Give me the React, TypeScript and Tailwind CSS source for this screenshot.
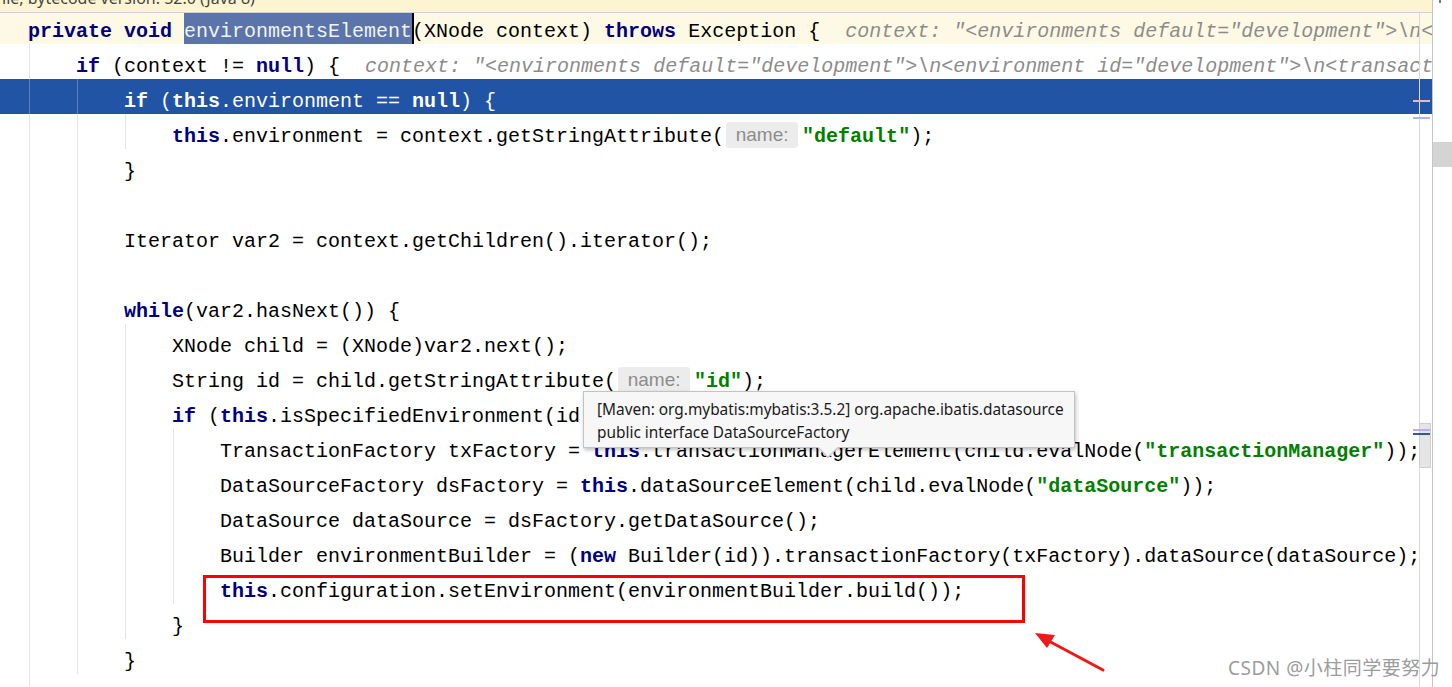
import React from 'react';

type Kind = 'p' | 'kw' | 'str' | 'hint' | 'dbg';
type Tok = { t: string; k: Kind };
type Line = { level: number; guides: number; toks: Tok[] };

const p = (t: string): Tok => ({ t, k: 'p' });
const kw = (t: string): Tok => ({ t, k: 'kw' });
const str = (t: string): Tok => ({ t, k: 'str' });
const dbg = (t: string): Tok => ({ t, k: 'dbg' });
const hint = (): Tok => ({ t: 'name:', k: 'hint' });

const padByLevel = ['pl-[28px]', 'pl-[76px]', 'pl-[124px]', 'pl-[172px]', 'pl-[220px]'];
const guideLeft = ['left-[29px]', 'left-[77px]', 'left-[125px]', 'left-[173px]'];

// line 1 and 3 are special (find highlight / selection), the rest come from here
const lines: Line[] = [
  {
    level: 1,
    guides: 1,
    toks: [
      kw('if'),
      p(' (context != '),
      kw('null'),
      p(') {'),
      dbg('context: "<environments default="development">\\n<environment id="development">\\n<transaction'),
    ],
  },
  { level: 2, guides: 2, toks: [] }, // selected line, rendered separately
  {
    level: 3,
    guides: 3,
    toks: [kw('this'), p('.environment = context.getStringAttribute('), hint(), str('"default"'), p(');')],
  },
  { level: 2, guides: 2, toks: [p('}')] },
  { level: 2, guides: 2, toks: [] },
  { level: 2, guides: 2, toks: [p('Iterator var2 = context.getChildren().iterator();')] },
  { level: 2, guides: 2, toks: [] },
  { level: 2, guides: 2, toks: [kw('while'), p('(var2.hasNext()) {')] },
  { level: 3, guides: 3, toks: [p('XNode child = (XNode)var2.next();')] },
  { level: 3, guides: 3, toks: [p('String id = child.getStringAttribute('), hint(), str('"id"'), p(');')] },
  { level: 3, guides: 3, toks: [kw('if'), p(' ('), kw('this'), p('.isSpecifiedEnvironment(id)) {')] },
  {
    level: 4,
    guides: 4,
    toks: [
      p('TransactionFactory txFactory = '),
      kw('this'),
      p('.transactionManagerElement(child.evalNode('),
      str('"transactionManager"'),
      p('));'),
    ],
  },
  {
    level: 4,
    guides: 4,
    toks: [p('DataSourceFactory dsFactory = '), kw('this'), p('.dataSourceElement(child.evalNode('), str('"dataSource"'), p('));')],
  },
  { level: 4, guides: 4, toks: [p('DataSource dataSource = dsFactory.getDataSource();')] },
  {
    level: 4,
    guides: 4,
    toks: [
      p('Builder environmentBuilder = ('),
      kw('new'),
      p(' Builder(id)).transactionFactory(txFactory).dataSource(dataSource);'),
    ],
  },
  { level: 4, guides: 4, toks: [kw('this'), p('.configuration.setEnvironment(environmentBuilder.build());')] },
  { level: 3, guides: 3, toks: [p('}')] },
  { level: 2, guides: 2, toks: [p('}')] },
  { level: 1, guides: 1, toks: [p('}')] },
];

const Token: React.FC<{ tok: Tok; selected?: boolean }> = ({ tok, selected }) => {
  switch (tok.k) {
    case 'kw':
      return <span className={selected ? 'font-bold text-white' : 'font-bold text-[#000080]'}>{tok.t}</span>;
    case 'str':
      return <span className="font-bold text-[#008000]">{tok.t}</span>;
    case 'hint':
      return (
        <span className="relative top-[3px] ml-[2px] mr-[4px] inline-block h-[26px] w-[72px] rounded-[3px] bg-[#ececec] text-center align-top font-['Liberation_Sans',sans-serif] text-[19px] leading-[26px] text-[#8c8c8c]">
          {tok.t}
        </span>
      );
    case 'dbg':
      return <span className="ml-[25px] italic text-[#8c8c8c]">{tok.t}</span>;
    default:
      return <span className={selected ? 'text-white' : 'text-black'}>{tok.t}</span>;
  }
};

const Guides: React.FC<{ count: number; light?: boolean }> = ({ count, light }) => (
  <>
    {guideLeft.slice(0, count).map((g) => (
      <span key={g} className={`absolute top-0 bottom-0 w-px ${g} ${light ? 'bg-[#5b7fc0]' : 'bg-[#e3e3e3]'}`} />
    ))}
  </>
);

const CodeLine: React.FC<{ line: Line }> = ({ line }) => (
  <div className={`relative h-[35px] whitespace-pre pt-[5px] leading-[35px] ${padByLevel[line.level]}`}>
    <Guides count={line.guides} />
    {line.toks.map((tok, i) => (
      <Token key={i} tok={tok} />
    ))}
  </div>
);

const App: React.FC = () => {
  return (
    <div className="relative flex h-[687px] w-[1452px] overflow-hidden bg-white">
      {/* editor column */}
      <div className="flex w-[1432px] flex-col overflow-hidden">
        {/* decompiled file banner, mostly scrolled off */}
        <div className="h-[13px] shrink-0 overflow-hidden border-b border-[#d2d2d2] bg-[#fdf4d2]">
          <div className="-mt-[13px] whitespace-pre pl-[2px] font-['Noto_Sans',sans-serif] text-[16px] leading-[22px] text-[#444]">
            ile, bytecode version: 52.0 (Java 8)
          </div>
        </div>

        <div className="relative flex-1 font-['Liberation_Mono',monospace] text-[20px]">
          {/* right margin guide */}
          <div className="absolute top-0 bottom-0 left-[1419px] z-10 w-px bg-[#dadada]" />

          {/* line 1: method signature, find highlight + caret */}
          <div className="h-[31px] overflow-hidden whitespace-pre bg-[#fef9e4] pl-[28px] pt-[1px] leading-[35px]">
            <span className="font-bold text-[#000080]">private void </span>
            <span className="bg-[#5b74aa] pt-[8px] pb-[2px] text-[#f2f2f2]">environmentsElement</span>
            <span className="relative -top-[2px] -mr-[2px] inline-block h-[33px] w-[2px] bg-black align-top" />
            <span className="text-black">(XNode context) </span>
            <span className="font-bold text-[#000080]">throws</span>
            <span className="text-black"> Exception {'{'}</span>
            <span className="ml-[25px] italic text-[#8c8c8c]">
              context: "&lt;environments default="development"&gt;\n&lt;environment id="development"&gt;
            </span>
          </div>

          <CodeLine line={lines[0]} />

          {/* line 3: selected */}
          <div className="relative h-[35px] whitespace-pre bg-[#2254a5] pl-[124px] pt-[5px] leading-[35px]">
            <Guides count={2} light />
            <Token tok={kw('if')} selected />
            <Token tok={p(' (')} selected />
            <Token tok={kw('this')} selected />
            <Token tok={p('.environment == ')} selected />
            <Token tok={kw('null')} selected />
            <Token tok={p(') {')} selected />
          </div>

          {lines.slice(2).map((line, i) => (
            <CodeLine key={i} line={line} />
          ))}

          {/* error stripe marks */}
          <div className="absolute top-[87px] left-[1413px] z-20 h-[2px] w-[17px] bg-[#f2b4b8]" />
          <div className="absolute top-[104px] left-[1413px] z-20 h-[2px] w-[17px] bg-[#b8aef4]" />
          <div className="absolute top-[410px] left-[1419px] z-20 h-[45px] w-[12px] border border-[#cfcfcf] bg-[#e5e5e5]" />
          <div className="absolute top-[416px] left-[1413px] z-20 h-[2px] w-[17px] bg-[#b8aef4]" />
          <div className="absolute top-[420px] left-[1413px] z-20 h-[2px] w-[17px] bg-[#2b58a8]" />
        </div>
      </div>

      {/* scrollbar strip */}
      <div className="flex flex-1 flex-col border-l border-[#c6c6c6] bg-white">
        <div className="ml-[6px] h-[3px] w-[2px] bg-[#777]" />
        <div className="mt-[139px] h-[25px] bg-[#d4d4d4]" />
      </div>

      {/* quick documentation popup */}
      <div className="absolute top-[391px] left-[583px] z-30 h-[57px] w-[492px] border border-[#c3c3c3] bg-[#f7f7f7] pl-[13px] pt-[6px] font-['Noto_Sans',sans-serif] text-[15.4px] leading-[23px] text-[#1a1a1a] shadow-[1px_2px_4px_rgba(0,0,0,0.25)]">
        <div className="whitespace-pre">[Maven: org.mybatis:mybatis:3.5.2] org.apache.ibatis.datasource</div>
        <div className="whitespace-pre">public interface DataSourceFactory</div>
        <span className="absolute -bottom-[8px] left-[237px] h-[14px] w-[14px] rotate-45 border-r border-b border-[#c3c3c3] bg-[#f7f7f7]" />
      </div>

      {/* annotation */}
      <div className="absolute top-[575px] left-[203px] z-30 h-[48px] w-[822px] border-[3px] border-[#ff0000]" />
      <svg className="absolute top-[625px] left-[1025px] z-30" width="90" height="55" viewBox="0 0 90 55">
        <line x1="78" y1="45" x2="20" y2="14" stroke="#f01818" strokeWidth="3" strokeLinecap="round" />
        <polygon points="10,8 30,10 22,23" fill="#f01818" />
      </svg>

      {/* watermark */}
      <div className="absolute top-[655px] left-[1228px] z-30 whitespace-pre font-['Noto_Sans','Noto_Sans_CJK_SC',sans-serif] text-[19px] leading-[26px] tracking-[0.5px] text-[#9c9c9c]">
        CSDN @小柱同学要努力
      </div>
    </div>
  );
};

export default App;
